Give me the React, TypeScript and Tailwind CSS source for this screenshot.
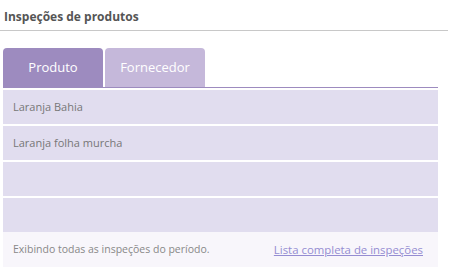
const rows = ["Laranja Bahia", "Laranja folha murcha", "", ""];

export default function App() {
  return (
    <div
      className="h-[280px] w-[456px] bg-white pt-[8px]"
      style={{ fontFamily: '"Open Sans", "Noto Sans", sans-serif' }}
    >
      {/* Header */}
      <div className="mr-[8px] border-b border-[#c8c8c8] pb-[5px] pl-[4px]">
        <h2 className="text-[12px] font-bold leading-[17px] text-[#555555]">Inspeções de produtos</h2>
      </div>

      <div className="ml-[3px] mr-[18px] mt-[17px]">
        {/* Tabs */}
        <div className="flex gap-[2px] border-b border-[#9d8bbf]">
          <button className="h-[39px] w-[100px] rounded-t-[4px] bg-[#9d8bbf] text-[13px] text-white">
            Produto
          </button>
          <button className="h-[39px] w-[100px] rounded-t-[4px] bg-[#c5b8da] text-[13px] text-white">
            Fornecedor
          </button>
        </div>

        {/* Rows */}
        <div className="mt-[2px] flex flex-col gap-[2px]">
          {rows.map((r, i) => (
            <div key={i} className="flex h-[34px] items-center bg-[#e1ddef] px-[10px] text-[11px] text-[#777777]">
              {r}
            </div>
          ))}
        </div>

        {/* Footer */}
        <div className="flex h-[35px] items-center justify-between bg-[#f8f6fb] pl-[10px] pr-[15px] text-[10.5px]">
          <span className="text-[#888888]">Exibindo todas as inspeções do período.</span>
          <a href="#" className="text-[11.4px] text-[#958dd2] underline">
            Lista completa de inspeções
          </a>
        </div>
      </div>
    </div>
  );
}
